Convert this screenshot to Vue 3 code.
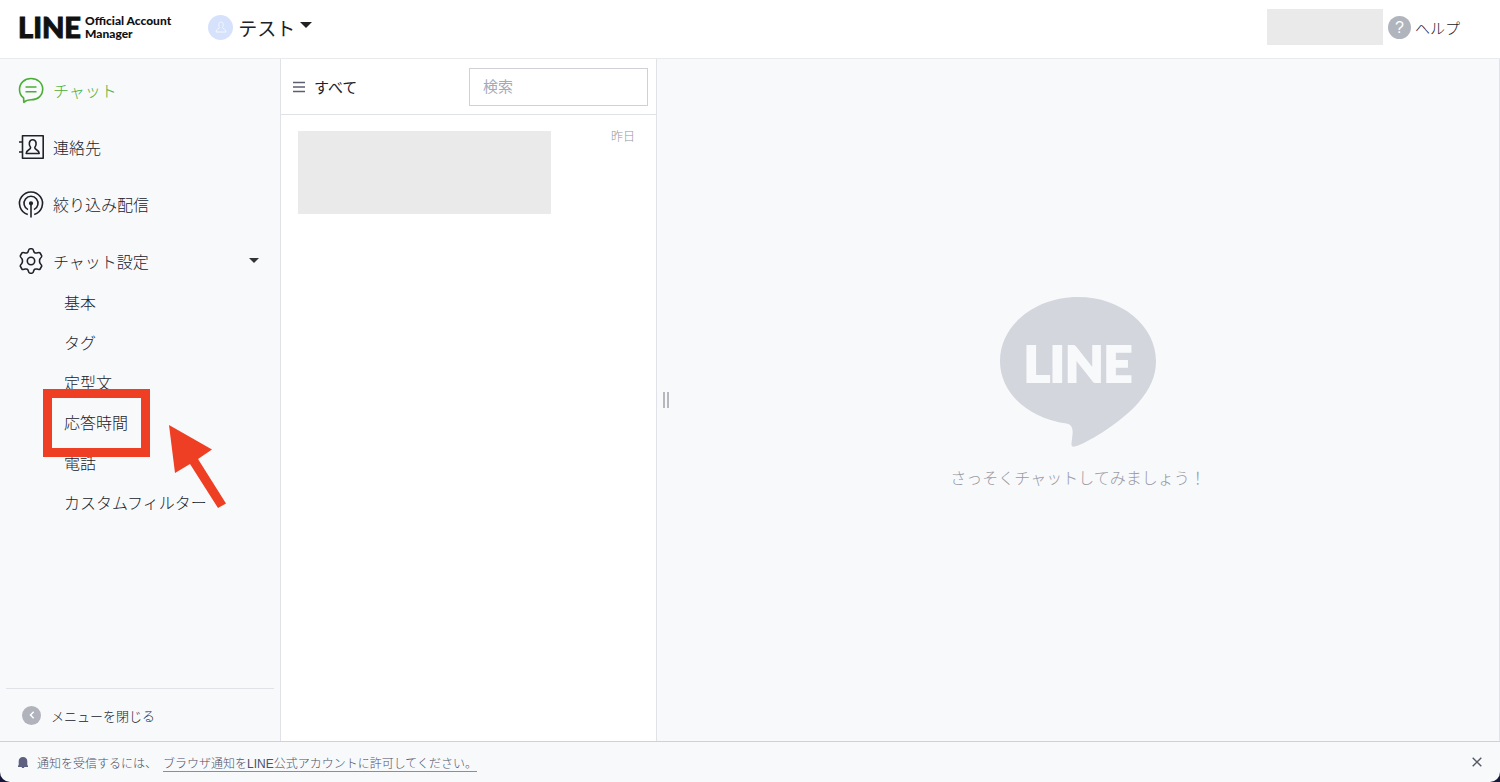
<template>
  <div class="page">
    <header class="header">
      <a class="logo" href="#" @click.prevent>
        <span class="logo-line">LINE</span>
        <span class="logo-sub">Official Account<br />Manager</span>
      </a>
      <button class="account" type="button">
        <span class="avatar">
          <svg width="12" height="12" viewBox="0 0 12 12" fill="none" stroke="#f4f7ff" stroke-width="1">
            <path d="M4.600 6.400C3.200 4.600 3.400 1 6 1s2.800 3.600 1.400 5.400c0 1.300 3.600 1.200 3.600 4.600H1c0-3.400 3.600-3.300 3.600-4.600z" />
          </svg>
        </span>
        <span>{{ accountName }}</span>
        <svg class="caret" width="12" height="6" viewBox="0 0 12 6"><path d="M0 0h12L6 6z" fill="#222" /></svg>
      </button>
      <div class="header-right">
        <div class="user-block"></div>
        <a class="help" href="#" @click.prevent>
          <span class="help-icon">?</span>
          <span>ヘルプ</span>
        </a>
      </div>
    </header>

    <div class="body">
      <aside class="sidebar">
        <ul class="menu">
          <li v-for="item in menus" :key="item.id">
            <a class="menu-item" :class="{ active: item.id === 'chat' }" href="#" @click.prevent="clickMenu(item)">
              <svg v-if="item.id === 'chat'" class="icon" viewBox="0 0 26 26">
                <path d="M13 1.500c6.600 0 11.700 4.400 11.700 10.600 0 6.400-4.900 10.700-11.300 10.700-2.700 0-5.100.2-7.600 2.500l-.2-4.400C2.800 18.900 1.500 15.800 1.500 12.500 1.500 6 6.600 1.500 13 1.500z" />
                <path d="M7.500 10h11M7.500 14.800h11" />
              </svg>
              <svg v-else-if="item.id === 'contact'" class="icon" viewBox="0 0 26 26">
                <path d="M4.500 1.800h20.700v22.400H4.500zM1 8h3.500M1 18h3.500" />
                <path d="M12.600 13.600c-2.200-2.600-1.800-7.800 2.100-7.800s4.300 5.200 2.100 7.800c-.3 2.400 4.400 2 4.400 5.900h-13c0-3.900 4.700-3.500 4.400-5.900z" />
              </svg>
              <svg v-else-if="item.id === 'broadcast'" class="icon" viewBox="0 0 26 26">
                <path d="M9.800 23.500a11.500 11.500 0 1 1 6.400 0" />
                <path d="M10 18.600a7 7 0 1 1 6 0" />
                <circle cx="13" cy="12.300" r="1.300" fill="currentColor" />
                <path d="M13 12v14.500" />
              </svg>
              <svg v-else class="icon" viewBox="0 0 26 26">
                <path d="M10.300 3.200c.3-1.400.8-2.400 1.700-2.400h2c.9 0 1.400 1 1.700 2.400.2 1.300 1.600 2.200 3 1.700 1.500-.5 2.900-.8 3.400.1l1.500 2.600c.5.900-.2 1.700-1.200 2.700-1.200 1.100-1.200 4.300 0 5.400 1 1 1.700 1.800 1.200 2.700L22.100 21c-.5.900-1.900.6-3.400.1-1.400-.5-2.800.4-3 1.700-.3 1.400-.8 2.400-1.700 2.400h-2c-.9 0-1.400-1-1.700-2.400-.2-1.300-1.600-2.200-3-1.700-1.500.5-2.900.8-3.400-.1l-1.500-2.600c-.5-.9.200-1.700 1.200-2.700 1.200-1.100 1.200-4.300 0-5.400-1-1-1.700-1.800-1.200-2.700L3.900 5c.5-.9 1.900-.6 3.400-.1 1.400.5 2.800-.4 3-1.700z" />
                <circle cx="13" cy="13" r="3.700" />
              </svg>
              <span>{{ item.label }}</span>
              <svg v-if="item.children" class="menu-caret" width="10" height="5" viewBox="0 0 10 5"><path d="M0 0h10L5 5z" fill="#333" /></svg>
            </a>
            <ul v-if="item.children && open" class="submenu">
              <li v-for="child in item.children" :key="child" class="submenu-item">
                <a href="#" @click.prevent>{{ child }}</a>
                <template v-if="child === marked">
                  <span class="mark"></span>
                  <svg class="arrow" width="58" height="84" viewBox="0 0 58 84">
                    <path d="M0 0l43 24.500-14 9.500 28 44.500-8 4.500-28-44-15 9z" fill="#ee3f24" />
                  </svg>
                </template>
              </li>
            </ul>
          </li>
        </ul>
        <button class="fold" type="button">
          <span class="fold-icon">
            <svg width="6" height="8" viewBox="0 0 6 8" fill="none" stroke="#fff" stroke-width="1.500"><path d="M4.700 .8L1.500 4l3.200 3.200" /></svg>
          </span>
          <span>メニューを閉じる</span>
        </button>
      </aside>

      <section class="list">
        <div class="list-header">
          <button class="filter" type="button">
            <svg width="12" height="12" viewBox="0 0 12 12" stroke="#5c5f70" stroke-width="1.500"><path d="M0 1.500h12M0 6h12M0 10.500h12" /></svg>
            <span>すべて</span>
          </button>
          <input v-model="keyword" class="search" type="text" placeholder="検索" aria-label="検索" />
        </div>
        <div class="chat-row">
          <div class="chat-block"></div>
          <span class="chat-date">昨日</span>
        </div>
      </section>

      <main class="content">
        <div class="resizer"></div>
        <div class="empty">
          <div class="bubble">
            <svg width="156" height="150" viewBox="0 0 156 150">
              <path d="M78 0c43 0 78 28.500 78 64 0 15-6 28-17 41-17 20-49 39-61 43.500-5 2-7 1.500-6.500-2.500l1-8c.6-6-.5-10.500-6-11.500C28 121 0 96 0 64 0 28.500 35 0 78 0z" fill="#d3d6dc" />
            </svg>
            <span class="bubble-text">LINE</span>
          </div>
          <p class="empty-text">さっそくチャットしてみましょう！</p>
        </div>
      </main>
    </div>

    <footer class="notice">
      <svg width="10" height="11" viewBox="0 0 10 11"><path d="M5 0c2.600 0 4.300 1.700 4.300 4.300V8l.7.8V10H6.300a1.300 1.300 0 0 1-2.600 0H0V8.800L.7 8V4.300C.7 1.700 2.400 0 5 0z" fill="#5d6080" /></svg>
      <p class="notice-text">通知を受信するには、<a href="#" @click.prevent>ブラウザ通知をLINE公式アカウントに許可してください。</a></p>
      <button class="close" type="button" aria-label="閉じる">
        <svg width="10" height="10" viewBox="0 0 10 10" stroke="#555866" stroke-width="1.400"><path d="M.7.7l8.600 8.600M9.300.7L.7 9.300" /></svg>
      </button>
    </footer>
  </div>
</template>

<script setup>
import { ref } from 'vue'

const accountName = 'テスト'
const marked = '応答時間'
const keyword = ref('')
const open = ref(true)

const menus = [
  { id: 'chat', label: 'チャット' },
  { id: 'contact', label: '連絡先' },
  { id: 'broadcast', label: '絞り込み配信' },
  {
    id: 'setting',
    label: 'チャット設定',
    children: ['基本', 'タグ', '定型文', '応答時間', '電話', 'カスタムフィルター']
  }
]

const clickMenu = (item) => {
  if (item.children) {
    open.value = !open.value
  }
}
</script>

<style>
body {
  margin: 0;
  background: #17173a;
}
</style>

<style scoped>
.page {
  display: flex;
  flex-direction: column;
  min-height: 100vh;
  overflow: hidden;
  border-radius: 0 0 10px 10px;
  background: #f8f9fb;
  color: #20222a;
  font-family: "Liberation Sans", "Noto Sans CJK JP", sans-serif;
  font-size: 16px;
  font-weight: 300;
}
a {
  color: inherit;
  text-decoration: none;
}
button {
  padding: 0;
  border: 0;
  background: none;
  color: inherit;
  font: inherit;
  cursor: pointer;
}
ul {
  margin: 0;
  padding: 0;
  list-style: none;
}
p {
  margin: 0;
}
svg {
  display: block;
  flex: none;
}
.header {
  display: flex;
  align-items: center;
  height: 54px;
  padding: 0 40px 4px 18px;
  background: #fff;
  border-bottom: 1px solid #e8eaee;
}
.logo {
  display: flex;
  align-items: center;
  gap: 4px;
  color: #111;
  font-family: Lato, sans-serif;
  font-weight: 900;
}
.logo-line {
  font-size: 29px;
  line-height: 30px;
  -webkit-text-stroke: 1px #111;
}
.logo-sub {
  font-size: 12px;
  line-height: 13px;
}
.account {
  display: flex;
  align-items: center;
  gap: 5px;
  margin-left: 37px;
  font-size: 19px;
  font-weight: 400;
}
.caret {
  margin-bottom: 4px;
}
.avatar {
  display: flex;
  align-items: center;
  justify-content: center;
  width: 25px;
  height: 25px;
  border-radius: 50%;
  background: #d6e1fb;
}
.header-right {
  display: flex;
  align-items: center;
  gap: 5px;
  margin-left: auto;
}
.user-block {
  width: 116px;
  height: 36px;
  background: #eaeaea;
}
.help {
  display: flex;
  align-items: center;
  gap: 4px;
  font-size: 15px;
}
.help-icon {
  width: 23px;
  border-radius: 50%;
  background: #b0b4bc;
  color: #fff;
  font-size: 16px;
  line-height: 23px;
  text-align: center;
}
.body {
  display: flex;
  flex: 1;
}
.sidebar {
  display: flex;
  flex-direction: column;
  width: 280px;
  border-right: 1px solid #e0e2e7;
}
.menu {
  display: flex;
  flex-direction: column;
  gap: 14px;
  padding-top: 9px;
}
.menu-item {
  display: flex;
  align-items: center;
  gap: 9px;
  height: 43px;
  padding: 0 21px 0 18px;
}
.menu-item.active {
  color: #4aae35;
}
.icon {
  width: 26px;
  height: 26px;
  overflow: visible;
  fill: none;
  stroke: currentColor;
  stroke-width: 1.6;
  stroke-linejoin: round;
}
.menu-caret {
  margin-left: auto;
}
.submenu {
  padding-top: 2px;
}
.submenu-item {
  position: relative;
  padding-left: 64px;
  line-height: 40px;
}
.mark {
  position: absolute;
  top: -15px;
  left: 43px;
  z-index: 1;
  width: 107px;
  height: 68px;
  box-sizing: border-box;
  border: 9px solid #ee3f24;
}
.arrow {
  position: absolute;
  top: 21px;
  left: 169px;
  z-index: 1;
}
.fold {
  display: flex;
  align-items: center;
  gap: 10px;
  height: 53px;
  margin: auto 6px 0;
  padding-left: 16px;
  border-top: 1px solid #e0e2e7;
  font-size: 13px;
}
.fold-icon {
  display: flex;
  align-items: center;
  justify-content: center;
  width: 19px;
  height: 19px;
  border-radius: 50%;
  background: #b0b2bc;
}
.list {
  width: 375px;
  background: #fff;
  border-right: 1px solid #e0e2e7;
}
.list-header {
  display: flex;
  align-items: center;
  justify-content: space-between;
  height: 55px;
  padding: 0 8px 0 12px;
  border-bottom: 1px solid #e0e2e7;
}
.filter {
  display: flex;
  align-items: center;
  gap: 9px;
  font-size: 15px;
  font-weight: 400;
}
.search {
  width: 179px;
  height: 38px;
  padding: 0 13px;
  box-sizing: border-box;
  border: 1px solid #cfd1d6;
  background: #fff;
  color: inherit;
  font-family: inherit;
  font-size: 15px;
}
.search::placeholder {
  color: #a6a8b3;
  font-weight: 400;
}
.chat-row {
  display: flex;
  justify-content: space-between;
  padding: 16px 21px 16px 17px;
}
.chat-block {
  width: 253px;
  height: 83px;
  background: #eaeaea;
}
.chat-date {
  color: #92949e;
  font-size: 12px;
  line-height: 12px;
}
.content {
  position: relative;
  display: flex;
  flex: 1;
  justify-content: center;
  border-right: 1px solid #e0e2e7;
}
.resizer {
  position: absolute;
  top: 50%;
  left: 6px;
  width: 2px;
  height: 16px;
  margin-top: -8px;
  border: solid #b6b8be;
  border-width: 0 2px;
}
.empty {
  display: flex;
  flex-direction: column;
  align-items: center;
  align-self: center;
  gap: 20px;
  padding-bottom: 12px;
}
.bubble {
  position: relative;
}
.bubble-text {
  position: absolute;
  top: 40px;
  left: 0;
  width: 100%;
  color: #f8f9fb;
  font-family: Lato, sans-serif;
  font-size: 50px;
  font-weight: 900;
  line-height: 52px;
  text-align: center;
  -webkit-text-stroke: 2px #f8f9fb;
}
.empty-text {
  color: #989aa3;
  line-height: 24px;
}
.notice {
  display: flex;
  align-items: center;
  height: 40px;
  padding: 0 18px;
  border-top: 1px solid #cfd1d7;
  color: #4d5068;
}
.notice-text {
  margin-left: 9px;
  font-size: 12px;
}
.notice-text a {
  margin-left: 6px;
  border-bottom: 1px solid #8b8d9c;
}
.close {
  margin-left: auto;
}
</style>
